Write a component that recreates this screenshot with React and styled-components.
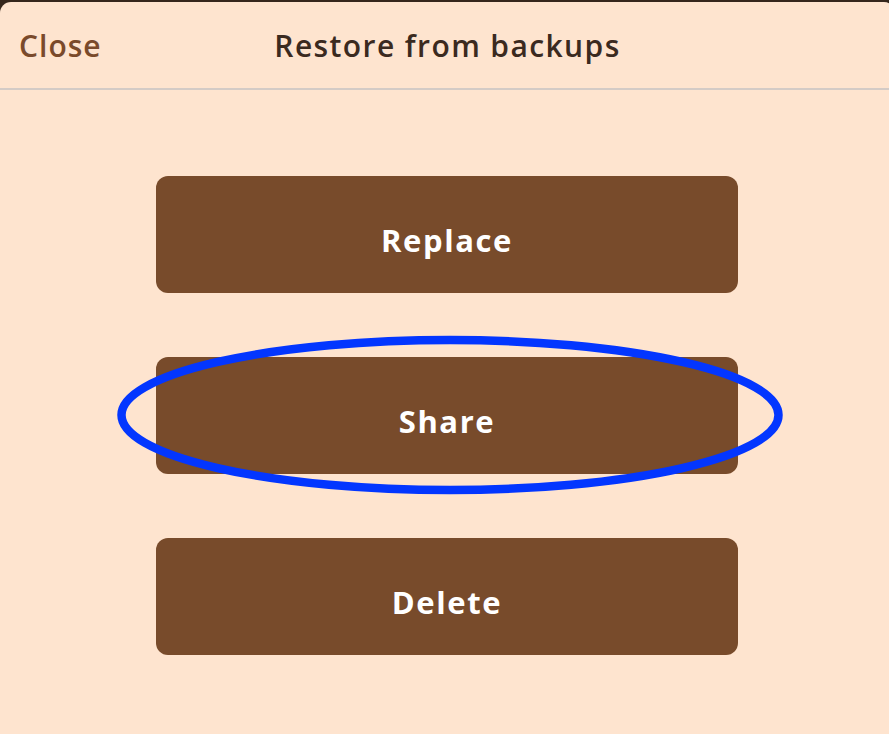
import styled, { createGlobalStyle } from 'styled-components';

const GlobalStyle = createGlobalStyle`
  html, body {
    margin: 0;
    padding: 0;
    overflow: hidden;
    background: #35261c;
  }
  body {
    font-family: 'Open Sans', 'Noto Sans', sans-serif;
  }
`

const actions = ['Replace', 'Share', 'Delete']

function App() {
  return (
    <>
      <GlobalStyle />
      <Sheet>
        <Header>
          <CloseButton>Close</CloseButton>
          <Title>Restore from backups</Title>
        </Header>
        <Actions>
          {actions.map((label) => (
            <ButtonWrap key={label}>
              <ActionButton>{label}</ActionButton>
              {label === 'Share' && (
                <Highlight viewBox="0 0 666 160" width="666" height="160">
                  <ellipse cx="333" cy="80" rx="328.5" ry="75" fill="none" stroke="#0336ff" strokeWidth="8.5" />
                </Highlight>
              )}
            </ButtonWrap>
          ))}
        </Actions>
      </Sheet>
    </>
  );
}

export default App;

const Sheet = styled.div`
  margin-top: 2px;
  width: 895px;
  height: 732px;
  background: #fee4cf;
  border-radius: 11px 11px 0 0;
  overflow: hidden;
`
const Header = styled.div`
  position: relative;
  height: 86px;
  display: flex;
  align-items: center;
  justify-content: center;
  border-bottom: 2px solid #d4cbc6;
`
const CloseButton = styled.button`
  position: absolute;
  left: 19px;
  top: 50%;
  transform: translateY(-50%);
  background: none;
  border: none;
  padding: 0;
  font-family: 'Open Sans', sans-serif;
  font-size: 30px;
  font-weight: 600;
  letter-spacing: 1px;
  color: #7a4a2b;
  cursor: pointer;
`
const Title = styled.h1`
  margin: 0;
  font-size: 30px;
  font-weight: 600;
  color: #3b2a1f;
  letter-spacing: 1.4px;
`
const Actions = styled.div`
  display: flex;
  flex-direction: column;
  align-items: center;
  gap: 64px;
  padding-top: 86px;
  padding-left: 0;
  padding-right: 1px;
`
const ButtonWrap = styled.div`
  position: relative;
`
const ActionButton = styled.button`
  display: flex;
  align-items: center;
  justify-content: center;
  width: 582px;
  height: 117px;
  padding: 10px 0 0;
  border: none;
  border-radius: 12px;
  background: #784b2b;
  color: #ffffff;
  font-family: 'Open Sans', sans-serif;
  font-size: 31px;
  font-weight: 700;
  letter-spacing: 1.6px;
  cursor: pointer;
`
const Highlight = styled.svg`
  position: absolute;
  left: -39px;
  top: -22px;
  pointer-events: none;
`
